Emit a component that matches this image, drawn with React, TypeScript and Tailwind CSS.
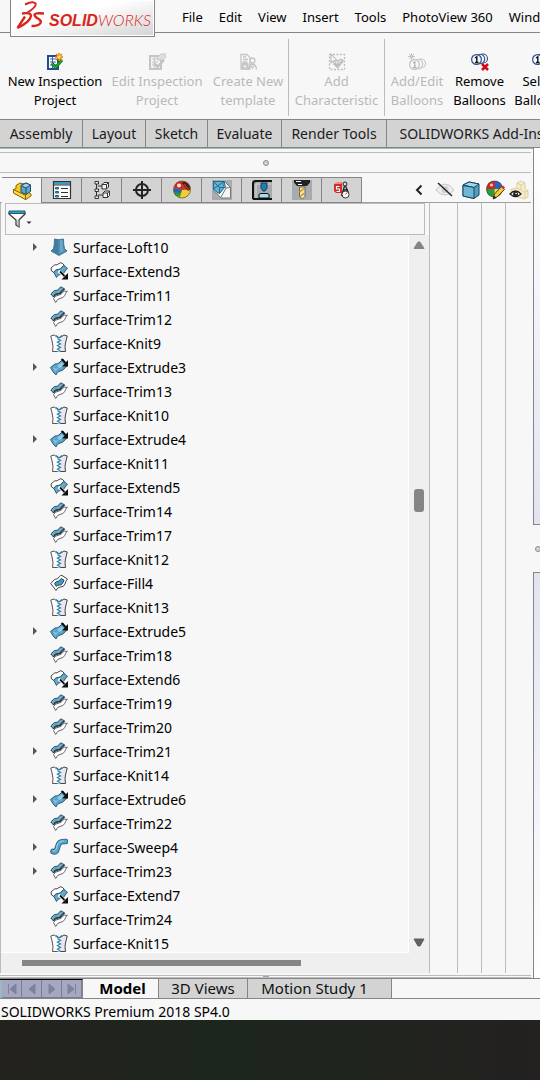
import type { ReactNode } from 'react';
import clsx from 'clsx';

type FeatureKind = 'Loft' | 'Extend' | 'Trim' | 'Knit' | 'Extrude' | 'Fill' | 'Sweep';

interface Feature {
  kind: FeatureKind;
  index: number;
  expandable?: boolean;
}

const features: Feature[] = [
  { kind: 'Loft', index: 10, expandable: true },
  { kind: 'Extend', index: 3 },
  { kind: 'Trim', index: 11 },
  { kind: 'Trim', index: 12 },
  { kind: 'Knit', index: 9 },
  { kind: 'Extrude', index: 3, expandable: true },
  { kind: 'Trim', index: 13 },
  { kind: 'Knit', index: 10 },
  { kind: 'Extrude', index: 4, expandable: true },
  { kind: 'Knit', index: 11 },
  { kind: 'Extend', index: 5 },
  { kind: 'Trim', index: 14 },
  { kind: 'Trim', index: 17 },
  { kind: 'Knit', index: 12 },
  { kind: 'Fill', index: 4 },
  { kind: 'Knit', index: 13 },
  { kind: 'Extrude', index: 5, expandable: true },
  { kind: 'Trim', index: 18 },
  { kind: 'Extend', index: 6 },
  { kind: 'Trim', index: 19 },
  { kind: 'Trim', index: 20 },
  { kind: 'Trim', index: 21, expandable: true },
  { kind: 'Knit', index: 14 },
  { kind: 'Extrude', index: 6, expandable: true },
  { kind: 'Trim', index: 22 },
  { kind: 'Sweep', index: 4, expandable: true },
  { kind: 'Trim', index: 23, expandable: true },
  { kind: 'Extend', index: 7 },
  { kind: 'Trim', index: 24 },
  { kind: 'Knit', index: 15 },
];

const menus = ['File', 'Edit', 'View', 'Insert', 'Tools', 'PhotoView 360', 'Window'];

const commandTabs = [
  { label: 'Assembly', width: 'w-[83px]' },
  { label: 'Layout', width: 'w-[63px]' },
  { label: 'Sketch', width: 'w-[62px]' },
  { label: 'Evaluate', width: 'w-[74px]' },
  { label: 'Render Tools', width: 'w-[105px]' },
  { label: 'SOLIDWORKS Add-Ins', width: 'w-[170px]' },
];

/* Feature tree icons, 18x18 */

const featureIcons: Record<FeatureKind, ReactNode> = {
  Loft: (
    <>
      <path d="M4.500 1q4.500 1.500 9 0 0 6 1 9.500l2.500 2.500-8 4.500L1 13l2.500-2.500q1-3.500 1-9.500z" fill="#4f8fb3" stroke="#2c617f" strokeWidth=".8" />
      <path d="M5 1.500q2 1 3.500.5V16.500L2 13l2-2q1-4 1-9.500z" fill="#3f7ea1" />
      <path d="M10 2.200 12.500 2q0 6 1 10.500L10 15z" fill="#6aa7c7" />
    </>
  ),
  Extend: (
    <>
      <path d="M1 6 4.500 3q3.500 0 4.500-1.500 1-1 3-.5l2.500 2.500q-2 .5-2.500 2.500-1 1.500-3.500 1.500-3 0-4.500 3L1.500 9z" fill="#fff" stroke="#444" />
      <path d="M4 10.500Q5 7.500 8 7.500t4-2.500q1-1.200 2.500-1.200L17.500 6.500q-2 1-3 3.500-1 2.500-4 2.500-3 0-4 3z" fill="#64a9cc" stroke="#2a5a74" />
      <path d="m8.500 9 5 4" stroke="#fff" strokeWidth="3" />
      <path d="m10 9.500 4.500 4.500" stroke="#111" strokeWidth="1.800" />
      <path d="M18 11v6.500h-6.500z" fill="#111" />
    </>
  ),
  Trim: (
    <>
      <path d="M.8 8 4.500 4.500q3.500.5 4.500-2Q10 .8 11.500 1l3 2q-2.500.4-3.500 2.700-1 2-3.500 2-3 0-4 3.300z" fill="#66a9cc" stroke="#2a5066" />
      <path d="M3.500 11Q5 8 7.800 8t4-2.500L14.500 3" fill="none" stroke="#333" strokeWidth="1.400" />
      <path d="M3.500 12.500q1.500-2.800 4.500-3.200 3.500-.3 4.500-2.800 1.200-1.800 4.800-1.300-2 2-2.600 4.300Q13.500 12 10 12.500 7 13 5.700 16.500z" fill="#fff" stroke="#666" />
    </>
  ),
  Knit: (
    <>
      <path d="M.8 2 4 1l4.500 3v13.500H2.500q1-5 0-8.500Z" fill="#fff" stroke="#555" />
      <path d="M17.200 2 14 1 9.500 4v13.500h6q-1-5 0-8.500Z" fill="#e8e8ee" stroke="#444" />
      <path d="M9 4v13.500" stroke="#fff" strokeWidth="3" />
      <path d="m6 1.500 3 2.500 3-2.500" fill="none" stroke="#2f82ad" strokeWidth="1.300" />
      <path d="m7.500 4.500 3 2-3 1.500 3 2-3 1.500 3 2-3 1.500 3 2" fill="none" stroke="#2f82ad" strokeWidth="1.300" />
    </>
  ),
  Extrude: (
    <>
      <path d="M.5 9.500 5 6q3 .5 5-2L13 1l4.500 7q-2 1-3.500 3-2 2-4 2-3 .5-4 4Q3 14.500 .5 9.500z" fill="#5ba4ca" stroke="#2a5c78" />
      <path d="M7 7q3 0 5-3l2 3q-2 3-5 3z" fill="#97cbe3" />
      <path d="M3 10q3-.5 5 .5l-3 4z" fill="#7dbbd9" />
      <path d="m11.500 1 4.500 4.500" stroke="#111" strokeWidth="2" />
      <path d="M18 2v6.500h-6z" fill="#111" />
    </>
  ),
  Fill: (
    <>
      <path d="M.8 9.500 4.500 5.500q3.500 0 5-3Q10.500 .8 12 1.500L17.500 5q-2 2-2.500 5-1 3-4.500 3-3 0-4.500 3.500z" fill="#fff" stroke="#444" />
      <path d="m4.500 9.500 1.800-1.700q3-.3 4.200-2.500l1-.8 2.500 1.800-1.500 3q-.8 2-3 1.800-2 0-3.300 1.200z" fill="#4c97bd" stroke="#17415a" />
    </>
  ),
  Sweep: (
    <>
      <path d="M3 13.500c3 1 3.500 0 4.500-4S9.500 3 15.500 3.500" fill="none" stroke="#2a617f" strokeWidth="5.600" strokeLinecap="round" />
      <path d="M3 13.500c3 1 3.500 0 4.500-4S9.500 3 15.500 3.500" fill="none" stroke="#5ba4ca" strokeWidth="3.800" strokeLinecap="round" />
      <path d="M3 13c3 0 3.500-2 4-5 .5-3 2.500-5 7-5" fill="none" stroke="#a4d3e8" strokeWidth="1" />
    </>
  ),
};

function FeatureIcon({ kind }: { kind: FeatureKind }) {
  return (
    <svg viewBox="0 0 18 18" className="size-[18px] shrink-0" aria-hidden="true">
      {featureIcons[kind]}
    </svg>
  );
}

/* Ribbon icons, 18x18 */

function NewProjectIcon() {
  return (
    <svg viewBox="0 0 18 18" className="size-[18px]" aria-hidden="true">
      <path d="M2 3h10v13H2z" fill="#fff" stroke="#234a94" strokeWidth="2" />
      <path d="M4 6h6M4 9h6M4 12h6M6.500 4v11" stroke="#3d63ab" />
      <path d="m6 10 3.500 4.500L16 7" fill="none" stroke="#0b7a1c" strokeWidth="3" />
      <path d="m6 10 3.500 4.500L16 7" fill="none" stroke="#3dc83d" strokeWidth="1" />
      <path d="M13 0v8M9 4h8M10 1l6 6M16 1l-6 6" stroke="#e87b10" strokeWidth="1.500" />
      <circle cx="13" cy="4" r="1.800" fill="#ffe94a" />
    </svg>
  );
}

function EditProjectIcon() {
  return (
    <svg viewBox="0 0 18 18" className="size-[18px]" aria-hidden="true">
      <path d="M2 3h11v13H2z" fill="#f2f2f2" stroke="#c4c4c4" strokeWidth="2" />
      <path d="M4 6h6M4 9h6M4 12h6M6.500 4v11" stroke="#c8c8c8" />
      <path d="M9 4 13 1h5v3l-3 3h-5z" fill="#dedede" stroke="#c8c8c8" />
      <path d="m6 10 3.500 4L16 7" fill="none" stroke="#c4c4c4" strokeWidth="2.500" />
    </svg>
  );
}

function TemplateIcon() {
  return (
    <svg viewBox="0 0 18 18" className="size-[18px]" fill="none" stroke="#c4c4c4" aria-hidden="true">
      <path d="M2 1.500h6l3 3V16H2zM4 4h3M4 6.500h5M4 9h4" strokeWidth="1.300" />
      <path d="M3 10h6v6H3z" fill="#c9c9c9" />
      <path d="M5 13.500h2" stroke="#fff" strokeWidth="1.500" />
      <circle cx="13.500" cy="7.500" r="2.500" fill="#f7f7f7" strokeWidth="1.300" />
      <path d="M9.500 16.500q0-5 4-5.500 4 .5 4 5.500M11.500 12l2 3 2-3" strokeWidth="1.300" />
    </svg>
  );
}

function CharacteristicIcon() {
  return (
    <svg viewBox="0 0 18 18" className="size-[18px]" fill="none" stroke="#bebebe" aria-hidden="true">
      <path d="M1.500 1.500h15v15h-15z" strokeDasharray="2 1.500" strokeWidth="1.300" />
      <path d="m6 10 3.500 3.500L15 7" strokeWidth="3" />
      <path d="M9 8.500 12 6l3 1-4 5z" fill="#d8d8d8" />
      <path d="M3 1v9l2-2 1.500 3 1.500-1-1.500-2.500H9z" fill="#f7f7f7" strokeWidth="1.100" />
    </svg>
  );
}

function BalloonsIcon({ variant }: { variant: 'add' | 'remove' | 'select' }) {
  const ink = variant === 'add' ? '#c4c4c4' : '#2d4f92';
  return (
    <svg viewBox="0 0 18 18" className="size-[18px]" aria-hidden="true">
      <g transform={variant === 'add' ? 'translate(1 5)' : undefined}>
        <circle cx="12" cy="5.500" r="4.500" fill="#f7f7f7" stroke={ink} strokeWidth="1.100" />
        <circle cx="9" cy="6" r="4.700" fill="#f7f7f7" stroke={ink} strokeWidth="1.100" />
        <circle cx="5.500" cy="6.500" r="4.900" fill="#f7f7f7" stroke={ink} strokeWidth="1.200" />
        <path d="M4 5 5.800 3.800V9.500M4 9.500h3.500" fill="none" stroke={variant === 'add' ? '#b5b5b5' : '#111'} strokeWidth="1.400" />
      </g>
      {variant === 'add' && <path d="M3.500 0v7M0 3.500h7M1 1l5 5M6 1 1 6" stroke="#c4c4c4" />}
      {variant === 'remove' && <path d="m11 11 6 6M17 11l-6 6" stroke="#d00d12" strokeWidth="2.500" />}
    </svg>
  );
}

const ribbonGroups = [
  [
    { lines: ['New Inspection', 'Project'], width: 'w-[102px]', icon: <NewProjectIcon /> },
    { lines: ['Edit Inspection', 'Project'], width: 'w-[102px]', icon: <EditProjectIcon />, disabled: true },
    { lines: ['Create New', 'template'], width: 'w-[80px]', icon: <TemplateIcon />, disabled: true },
  ],
  [{ lines: ['Add', 'Characteristic'], width: 'w-[95px]', icon: <CharacteristicIcon />, disabled: true }],
  [
    { lines: ['Add/Edit', 'Balloons'], width: 'w-[64px]', icon: <BalloonsIcon variant="add" />, disabled: true },
    { lines: ['Remove', 'Balloons'], width: 'w-[61px]', icon: <BalloonsIcon variant="remove" /> },
    { lines: ['Select', 'Balloons'], width: 'w-[61px]', icon: <BalloonsIcon variant="select" /> },
  ],
];

/* Manager pane tab icons, 20x20 */

const managerTabs = [
  {
    label: 'FeatureManager design tree',
    icon: (
      <>
        <path d="M1.500 8.500 4 7.500V4.500L8 2l4 1v5l7 5v2l-5 3.500L2 12z" fill="#f7c928" stroke="#8a6200" />
        <path d="m1.500 8.500 12 6v4l-12-6.500z" fill="#fddb4a" stroke="#8a6200" />
        <path d="m9 4.500 5-2.500 4.500 2v6.500L14 13.500l-5-2.500z" fill="#5fa5c9" stroke="#1b4d69" />
        <path d="m9 4.500 5 2.500 4.500-3L14 2zM14 7v6.500" fill="#9dd0e6" stroke="#1b4d69" />
      </>
    ),
  },
  {
    label: 'PropertyManager',
    icon: (
      <>
        <path d="M1.500 1.500h17v17h-17z" fill="#fff" stroke="#333" strokeWidth="1.200" />
        <path d="M2 2h16v2.500H2z" fill="#2f9dc8" />
        <path d="M1.500 5h17" stroke="#333" />
        <path d="M3.500 7.500h3v1.500h-3zM3.500 11.500h3V13h-3zM3.500 15.500h3v1.500h-3z" fill="#4aa9d0" stroke="#235f7c" />
        <path d="M9 8.500h7M9 12.500h7M9 16.500h7" stroke="#333" strokeWidth="1.200" />
      </>
    ),
  },
  {
    label: 'ConfigurationManager',
    icon: (
      <g fill="#f4f4f4" stroke="#333">
        <path d="M4.500 2v16M6 6h5M6 15h5" fill="none" />
        <path d="M3 1.500h3.500V4H3zM3 9h3.500v2.500H3zM3 16h3.500v2.500H3z" />
        <path d="m10 4.500 2-2h4.500V7l-2 2H10zM11 13l2-2h4.500v4.500l-2 2H11z" />
        <path d="M10 4.500h4.500V9M14.500 4.500l2-2M11 13h4.500v4.500M15.500 13l2-2" fill="none" />
      </g>
    ),
  },
  {
    label: 'DimXpertManager',
    icon: (
      <g fill="none" stroke="#222" strokeWidth="2">
        <circle cx="10" cy="10" r="6" />
        <path d="M10 1v18M1 10h18" />
      </g>
    ),
  },
  {
    label: 'DisplayManager',
    icon: (
      <>
        <circle cx="10" cy="9.500" r="8.500" fill="#f2cf2a" />
        <path d="M10 10 2 8q1-7 8-7z" fill="#d8231f" />
        <path d="M10 10 2 7.500q-1.500 5 1.500 8L8 17z" fill="#2c9b3c" />
        <path d="M10 10 2 8q0 2 0 4l6 1z" fill="#2b62b8" />
        <path d="M10 10V1q8.500 0 8.500 8.500z" fill="#c33a2c" />
        <path d="M10 3q2-2 5 0 3.500 3 3 6.500L16 11z" fill="#33201d" />
        <path d="m12 4 5 6" stroke="#c33a2c" strokeWidth="1.200" />
        <circle cx="7" cy="5.500" r="2" fill="#ffe6e2" />
        <circle cx="10" cy="9.500" r="8.500" fill="none" stroke="#6c5430" strokeWidth=".8" />
      </>
    ),
  },
  {
    label: 'Inspection',
    icon: (
      <>
        <path d="M0 0h20v20H0z" fill="#a9aaae" />
        <path d="M1.500 1.500h11l6 6V18H9l-7.500-8z" fill="#f3f5f6" stroke="#777" />
        <path d="M1.500 1.500H12V8l-4 5H6l-4.500-4z" fill="#62b0d2" stroke="#1f6d91" />
        <path d="m1.500 1.500 6 6h6l-1.500-6M7.500 7.500V14M1.500 9 12 1.500" fill="none" stroke="#1f6d91" />
        <path d="m9 17 5-9 4.500-.5" fill="none" stroke="#777" />
      </>
    ),
  },
  {
    label: 'Additive',
    icon: (
      <>
        <path d="M0 0h20v20H0z" fill="#a9aaae" />
        <path d="M1 19V4q0-3 3-3h16M1 19h19" fill="none" stroke="#111" strokeWidth="2" />
        <path d="M4 18V4h15" fill="none" stroke="#d5d5d8" />
        <path d="M9 3h6v5l-2 3h-2L9 8z" fill="#1e7fb2" stroke="#123f5a" />
        <path d="M7 18v-3q0-1.500 2-1.500h6q2 0 2 1.500v3z" fill="#a9dcea" stroke="#111" />
      </>
    ),
  },
  {
    label: 'CAM',
    icon: (
      <>
        <path d="M0 0h20v20H0z" fill="#a9aaae" />
        <path d="M2 0h16v2.500l-3 3.500H5L2 2.500z" fill="#222" />
        <path d="M4 1.500h5M6 4.500h4" stroke="#fff" />
        <path d="M7.500 7h5.500v9.500L10.500 19l-3-2z" fill="#f3e2a0" stroke="#666" />
        <path d="m7.500 12 5-4M7.500 17l5-4" stroke="#c99a17" strokeWidth="1.500" />
      </>
    ),
  },
  {
    label: 'SOLIDWORKS Inspection',
    icon: (
      <>
        <path d="m2 4 8-2v11H4l-2-2z" fill="#d42a2a" />
        <path d="m2 4 3-2h6l-2 2z" fill="#f08a84" />
        <path d="M7.500 6.500h-3v2.500h3v2.500h-3" fill="none" stroke="#fff" strokeWidth="1.100" />
        <circle cx="13" cy="4" r="2" fill="#ddd" stroke="#222" />
        <path d="m12.500 6-3 10M13.500 6l3 7M11 10h5" fill="none" stroke="#222" strokeWidth="1.300" />
        <circle cx="13.500" cy="14.500" r="3.500" fill="#fff" stroke="#333" />
        <path d="m13.500 14.500 1.500-2" stroke="#c22" />
      </>
    ),
  },
];

const displayColumns = [
  {
    label: 'Hide/Show',
    width: 'w-[28px]',
    icon: (
      <>
        <path d="M1 10q4-6 9-6t9 6q-4 5-9 5t-9-5z" fill="#eee" stroke="#c6c6c6" />
        <circle cx="10" cy="9.500" r="3.500" fill="#cfcfcf" />
        <path d="m3 3 14 13" stroke="#222" strokeWidth="1.400" />
      </>
    ),
  },
  {
    label: 'Display Mode',
    width: 'w-6',
    icon: (
      <>
        <path d="m2 5 6-3 10 2v11l-5 3.500L2 16z" fill="#4f9fc0" stroke="#16465f" />
        <path d="m2 5 6-3 10 2-5 3.500z" fill="#a3d6e8" stroke="#16465f" />
        <path d="M2 5.500 13 7.500v11L2 16z" fill="#6fb8d5" stroke="#16465f" />
      </>
    ),
  },
  {
    label: 'Appearance',
    width: 'w-6',
    icon: (
      <>
        <circle cx="9.500" cy="9" r="8" fill="#d8231f" />
        <path d="M9.500 9V1q8 0 8 8z" fill="#2b62c8" />
        <path d="M9.500 9h-8q0 8 8 8z" fill="#23a03a" />
        <path d="M9.500 9h8q0 8-8 8z" fill="#e9e04a" />
        <path d="M9.500 9 2 7q1-6 7.500-6z" fill="#d8231f" />
        <circle cx="6.500" cy="5" r="1.600" fill="#ffc9c4" />
        <circle cx="9.500" cy="9" r="8" fill="none" stroke="#444" strokeWidth=".7" />
        <path d="m8 19 1.500-5 7-7.500 3 3-7.500 7.500z" fill="#f4c83c" stroke="#5b3c10" />
        <path d="m8 19 1-3.500 2.500 2.500z" fill="#222" />
        <path d="m16 7 2-1.500 2 2L18.500 9.500z" fill="#c33" />
      </>
    ),
  },
  {
    label: 'Transparency',
    width: 'w-6',
    icon: (
      <>
        <path d="m8 3 4-2 4 2v6l3 2v6l-4 2-8-3-5-3V9l6-1z" fill="#f7ecc9" stroke="#decfa0" />
        <path d="m8 3 4 2 4-2M12 5v5l4 2 3-1M12 10l-4-2M16 12v7" fill="none" stroke="#decfa0" />
        <path d="M1 14q5.500-6 11 0-5.500 5-11 0z" fill="#fff" stroke="#222" strokeWidth="1.300" />
        <circle cx="6.500" cy="14" r="2.500" fill="#222" />
        <circle cx="7" cy="13.500" r=".8" fill="#fff" />
      </>
    ),
  },
];

function Logo() {
  return (
    <div className="absolute top-0 left-[10px] flex h-[37px] w-[145px] border border-t-0 border-[#858585] bg-linear-to-br from-white from-40% to-[#d4d4d4] pl-[5px] text-[#d9261c] ring-1 ring-white ring-inset">
      <svg viewBox="0 0 28 29" className="mt-px h-[29px] w-7 shrink-0" fill="none" stroke="currentColor" aria-hidden="true">
        <path d="M9 3.500Q17-.5 19.500 2.500 21 5.500 11.500 11.500" strokeWidth="2" />
        <path d="M6 12.500q9-1.500 9 2.500-1 6-13.500 12L9 15.500" strokeWidth="2.300" strokeLinejoin="bevel" />
        <path d="M28 12.500q-9.500-1-9.500 1.500 0 1.500 3.500 3.500t2.500 4.500q-1.500 3-9 3" strokeWidth="2.400" />
      </svg>
      <span className="ml-[5px] pt-[10px] font-['Liberation_Sans'] text-base leading-5 whitespace-nowrap italic">
        <b>SOLID</b>
        <span className="font-['Lato'] font-light">WORKS</span>
      </span>
    </div>
  );
}

function MenuBar() {
  return (
    <header className="relative h-[33px] border-b border-[#858585]">
      <nav className="flex h-8 items-center gap-4 overflow-hidden pl-[182px] text-black">
        {menus.map((menu) => (
          <button key={menu} type="button" className="shrink-0 pt-1 whitespace-nowrap">
            {menu}
          </button>
        ))}
      </nav>
      <Logo />
    </header>
  );
}

function Ribbon() {
  return (
    <div className="flex h-[86px] overflow-hidden pt-[6px] pb-[3px] pl-1">
      {ribbonGroups.map((group, i) => (
        <div key={i} className={clsx('flex shrink-0', i < ribbonGroups.length - 1 && 'border-r border-[#bcbcbc]')}>
          {group.map((item) => (
            <button
              key={item.lines.join(' ')}
              type="button"
              disabled={item.disabled}
              className={clsx(
                'flex shrink-0 flex-col items-center pt-[14px] leading-[19px] whitespace-nowrap',
                item.width,
                item.disabled ? 'text-[#b9b9b9]' : 'text-black'
              )}
            >
              {item.icon}
              <span className="mt-px">{item.lines[0]}</span>
              <span>{item.lines[1]}</span>
            </button>
          ))}
        </div>
      ))}
    </div>
  );
}

function CommandTabs() {
  return (
    <div className="flex h-[29px] overflow-hidden border-y border-[#858585] bg-[#d3d3d3] text-sm text-[#1b1b1b]">
      {commandTabs.map((tab) => (
        <button key={tab.label} type="button" className={clsx('shrink-0 border-r border-[#858585] whitespace-nowrap', tab.width)}>
          {tab.label}
        </button>
      ))}
    </div>
  );
}

function ManagerTabs() {
  return (
    <div className="flex h-[26px] border-b border-[#a0a0a0] pl-[2px]">
      {managerTabs.map((tab, i) => (
        <button
          key={tab.label}
          type="button"
          aria-label={tab.label}
          className={clsx(
            '-mb-px flex h-[26px] w-10 shrink-0 items-center justify-center border-t border-r border-[#858585]',
            i === 0 ? 'bg-[#f7f7f7]' : 'border-b bg-[#d3d3d3]'
          )}
        >
          <svg viewBox="0 0 20 20" className="size-5">{tab.icon}</svg>
        </button>
      ))}
      <div className="ml-auto flex shrink-0 items-center">
        <button type="button" aria-label="Hide display pane" className="flex w-6 justify-center">
          <svg viewBox="0 0 8 12" className="h-3 w-2" fill="none" stroke="#222" strokeWidth="2">
            <path d="M6.500 1.500 2 6l4.500 4.500" />
          </svg>
        </button>
        {displayColumns.map((column) => (
          <button key={column.label} type="button" aria-label={column.label} className={clsx('flex h-full items-center justify-center', column.width)}>
            <svg viewBox="0 0 20 20" className="size-5">{column.icon}</svg>
          </button>
        ))}
      </div>
    </div>
  );
}

function FilterBox() {
  return (
    <label className="mr-[4px] ml-[4px] flex h-8 items-center border border-[#bcbcbc] pl-[2px]">
      <svg viewBox="0 0 24 18" className="h-[18px] w-6 shrink-0" aria-hidden="true">
        <path d="M1 3h16v1L11 10v7l-3-2v-5L1 4z" fill="#fff" stroke="#333" strokeWidth="1.200" />
        <path d="M11 10v7l-1.500-1v-6L15 4.500z" fill="#999" />
        <path d="M1 1h16v2.500H1z" fill="#3a9cc0" stroke="#1c5874" />
        <path d="M18.500 11.500h5L21 14z" fill="#333" />
      </svg>
      <input type="text" aria-label="Filter features" className="min-w-0 flex-1 bg-transparent outline-none" />
    </label>
  );
}

function FeatureTree() {
  return (
    <ul className="h-[718px] min-w-0 flex-1 overflow-hidden border-r border-b border-white text-sm text-black">
      {features.map((feature) => (
        <li key={`${feature.kind}${feature.index}`} className="flex h-6 items-center pl-[31px]">
          <span className="w-[18px] shrink-0">
            {feature.expandable && (
              <svg viewBox="0 0 6 8" className="h-2 w-[6px]" aria-hidden="true">
                <path d="M1 0v8l4-4z" fill="#555" />
              </svg>
            )}
          </span>
          <FeatureIcon kind={feature.kind} />
          <span className="ml-[5px] pt-[2px] whitespace-nowrap">{`Surface-${feature.kind}${feature.index}`}</span>
        </li>
      ))}
    </ul>
  );
}

function VerticalScrollbar() {
  return (
    <div className="relative flex w-5 shrink-0 flex-col items-center justify-between bg-[#efefef] pt-[6px] pb-[6px]">
      <svg viewBox="0 0 12 9" className="h-[9px] w-3" aria-hidden="true">
        <path d="M5 1h2l4 6.500H1z" fill="#858585" stroke="#858585" strokeLinejoin="round" />
      </svg>
      <div className="absolute top-[254px] h-[23px] w-[10px] rounded-[3px] bg-[#858585]" />
      <svg viewBox="0 0 12 9" className="h-[9px] w-3" aria-hidden="true">
        <path d="M5 8h2l4-7H1z" fill="#606060" stroke="#606060" strokeLinejoin="round" />
      </svg>
    </div>
  );
}

function SplitHandle() {
  return <div className="size-[6px] shrink-0 rounded-full border border-[#8c8c8c] bg-[#d3d3d3]" />;
}

function ManagerPane() {
  return (
    <section className="min-w-0 flex-1 border-t border-[#9db9c0] pr-[2px]">
      <div className="mt-[3px] flex h-[21px] items-center justify-center border-y border-[#bcbcbc]">
        <SplitHandle />
      </div>
      <div className="mt-1">
        <ManagerTabs />
      </div>
      <div className="flex border-l border-[#bcbcbc]">
        <div className="min-w-0 flex-1">
          <FilterBox />
          <div className="flex">
            <FeatureTree />
            <VerticalScrollbar />
          </div>
          <div className="flex h-5 items-center bg-[#efefef] pl-[21px]">
            <div className="h-[6px] w-[279px] bg-[#858585]" />
          </div>
        </div>
        <div className="flex border-l border-[#bcbcbc]">
          <div className="w-[27px]" />
          <div className="w-6 border-l border-[#bcbcbc]" />
          <div className="w-6 border-l border-[#bcbcbc]" />
          <div className="w-[26px] border-l border-[#bcbcbc]" />
        </div>
      </div>
      <div className="mt-[2px] flex h-[3px] justify-center border-y border-[#bcbcbc]">
        <div className="w-[6px] bg-[#a0a0a0]" />
      </div>
    </section>
  );
}

function Viewports() {
  return (
    <section className="flex w-[7px] shrink-0 flex-col overflow-hidden">
      <div className="h-[377px] border-b border-l border-[#858585] bg-linear-to-b from-white to-[#e1e4f0]" />
      <div className="flex h-[47px] items-center pl-[2px]">
        <SplitHandle />
      </div>
      <div className="flex-1 border-t border-l border-[#858585] bg-linear-to-b from-[#e1e4f0] to-white" />
    </section>
  );
}

const sheetNav = [
  { label: 'First', d: 'M2.500 1v10M10 1v10L4 6z' },
  { label: 'Previous', d: 'M9 1v10L3 6z' },
  { label: 'Next', d: 'M3 1v10l6-5z' },
  { label: 'Last', d: 'M9.500 1v10M2 1v10l6-5z' },
];

function SheetTabs() {
  return (
    <div className="flex h-[21px] border-t border-b border-[#858585] text-[15px] leading-[19px] text-[#111]">
      <div className="flex shrink-0 border-t border-r border-t-black border-r-[#858585] bg-[#9db9c0] pl-[2px]">
        {sheetNav.map((nav) => (
          <button key={nav.label} type="button" aria-label={nav.label} className="flex w-5 items-center justify-center border-r border-b border-[#7a7b9b] bg-[#a6a7c0]">
            <svg viewBox="0 0 12 12" className="size-3" fill="#7f809e" stroke="#7f809e">
              <path d={nav.d} />
            </svg>
          </button>
        ))}
      </div>
      <button type="button" className="w-[76px] shrink-0 border-r border-[#858585] pl-1 font-bold text-black">Model</button>
      <button type="button" className="w-[89px] shrink-0 border-r border-[#858585] bg-[#d3d3d3]">3D Views</button>
      <button type="button" className="w-[144px] shrink-0 border-r border-[#858585] bg-[#d3d3d3] pr-[10px]">Motion Study 1</button>
    </div>
  );
}

export default function App() {
  return (
    <div className="min-h-screen overflow-hidden bg-linear-to-r from-[#24221d] via-[#1c261d] via-40% to-[#242120] font-['Noto_Sans',sans-serif] text-[13px]">
      <div className="bg-[#f7f7f7]">
        <MenuBar />
        <Ribbon />
        <CommandTabs />
        <main className="flex">
          <ManagerPane />
          <Viewports />
        </main>
        <SheetTabs />
        <footer className="h-[21px] pl-px text-sm leading-[25px] text-black">SOLIDWORKS Premium 2018 SP4.0</footer>
      </div>
    </div>
  );
}
